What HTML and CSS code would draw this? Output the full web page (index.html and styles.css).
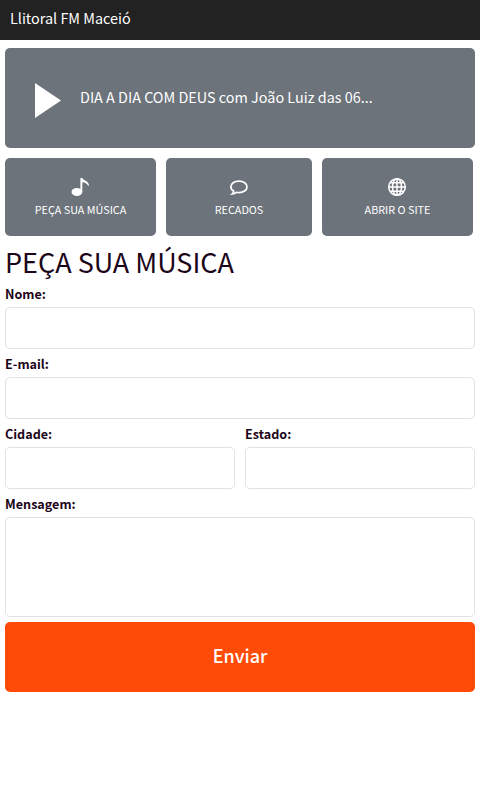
FILE: index.html
```html
<!DOCTYPE html>
<html lang="pt-br">
  <head>
    <meta charset="UTF-8" />
    <meta name="viewport" content="width=device-width, initial-scale=1.0" />
    <title>Llitoral FM Maceió</title>
    <link rel="stylesheet" href="styles.css">
  </head>

  <body>
    <header class="topo"><span>Llitoral FM Maceió</span></header>

    <main class="conteudo">
      <div class="player">
        <svg class="play" viewBox="0 0 26 35"><path d="M0 0L26 17.5L0 35z" /></svg>
        <span class="programa">DIA A DIA COM DEUS com João Luiz das 06...</span>
      </div>

      <nav class="menu">
        <a class="item" href="#pedido">
          <svg class="icone" viewBox="0 0 20 20">
            <ellipse cx="6.9" cy="15" rx="5.4" ry="4" />
            <path d="M10.400 1h1.900c.5 2.400 6.200 2.300 6.700 7.500l-.9.300c-1.200-2.300-3-3.300-5.800-3.500V15h-1.900z" />
          </svg>
          <span>PEÇA SUA MÚSICA</span>
        </a>
        <a class="item" href="#recados">
          <svg class="icone traco" viewBox="0 0 20 20">
            <path d="M4.700 14.100C2.900 13.100 1.900 11.600 1.900 9.900c0-3.300 3.500-5.700 8-5.700s8.100 2.400 8.100 5.700-3.600 5.700-8.100 5.700c-.9 0-1.700-.1-2.400-.3-1.100.9-2.300 1.500-4.200 1.600.9-.8 1.500-1.600 1.400-2.800z" />
          </svg>
          <span>RECADOS</span>
        </a>
        <a class="item" href="#site">
          <svg class="icone globo" viewBox="0 0 20 20">
            <circle cx="10" cy="10" r="8.300" />
            <ellipse cx="10" cy="10" rx="4.500" ry="8.300" />
            <path d="M10 1.700v16.600M1.700 10h16.600M3.300 5.800h13.400M3.300 14.200h13.400" />
          </svg>
          <span>ABRIR O SITE</span>
        </a>
      </nav>

      <form class="formulario" id="pedido">
        <h1>PEÇA SUA MÚSICA</h1>

        <div class="campo">
          <label for="nome">Nome:</label>
          <input type="text" id="nome" />
        </div>
        <div class="campo">
          <label for="email">E-mail:</label>
          <input type="email" id="email" />
        </div>
        <div class="linha">
          <div class="campo">
            <label for="cidade">Cidade:</label>
            <input type="text" id="cidade" />
          </div>
          <div class="campo">
            <label for="estado">Estado:</label>
            <input type="text" id="estado" />
          </div>
        </div>
        <div class="campo">
          <label for="mensagem">Mensagem:</label>
          <textarea id="mensagem"></textarea>
        </div>

        <button type="submit" class="enviar">Enviar</button>
      </form>
    </main>
  </body>
</html>
```
FILE: styles.css
```css
* {
  box-sizing: border-box;
}

body {
  margin: 0;
  font-family: "Noto Sans CJK SC", "Noto Sans", sans-serif;
  font-size: 14.4px;
  background: #fff;
  color: #1c0518;
}

.topo {
  height: 40px;
  padding: 0 10px;
  background: #222;
  color: #fff;
  line-height: 36px;
}

.conteudo {
  padding: 8px 5px;
}

.player {
  display: flex;
  align-items: center;
  gap: 19px;
  height: 100px;
  padding: 4px 30px 0;
  background: #6c737b;
  border-radius: 5px;
  color: #fff;
}

.play {
  width: 26px;
  height: 35px;
  fill: #fff;
}

.programa {
  line-height: 20px;
  padding-bottom: 6px;
}

.menu {
  display: flex;
  gap: 10px;
  margin-top: 10px;
}

.item {
  display: flex;
  flex-direction: column;
  align-items: center;
  width: 151px;
  height: 78px;
  padding-top: 19px;
  background: #6c737b;
  border-radius: 5px;
  color: #fff;
  font-size: 10.8px;
  line-height: 16px;
  text-decoration: none;
}

.item:nth-child(2) {
  width: 146px;
}

.icone {
  width: 20px;
  height: 20px;
  margin: 0 1px 4px 0;
  fill: #fff;
}

.traco {
  fill: none;
  stroke: #fff;
  stroke-width: 1.700;
}

.globo {
  fill: none;
  stroke: #fff;
  stroke-width: 1.500;
}

h1 {
  margin: 7px 0 3px;
  font-size: 27px;
  font-weight: 400;
  line-height: 38px;
}

.campo {
  flex: 1;
}

.linha {
  display: flex;
  gap: 10px;
}

label {
  display: block;
  height: 23px;
  font-size: 12.6px;
  font-weight: 700;
  line-height: 20px;
}

input,
textarea {
  display: block;
  width: 100%;
  height: 42px;
  margin-bottom: 5px;
  padding: 10px;
  background: #fff;
  border: 1px solid #e1e1e1;
  border-radius: 5px;
  font: inherit;
  resize: none;
}

textarea {
  height: 100px;
}

.enviar {
  display: block;
  width: 100%;
  height: 70px;
  padding: 0 0 4px;
  background: #ff4b08;
  border: none;
  border-radius: 5px;
  color: #fff;
  font-family: inherit;
  font-size: 18px;
  font-weight: 500;
}
```
